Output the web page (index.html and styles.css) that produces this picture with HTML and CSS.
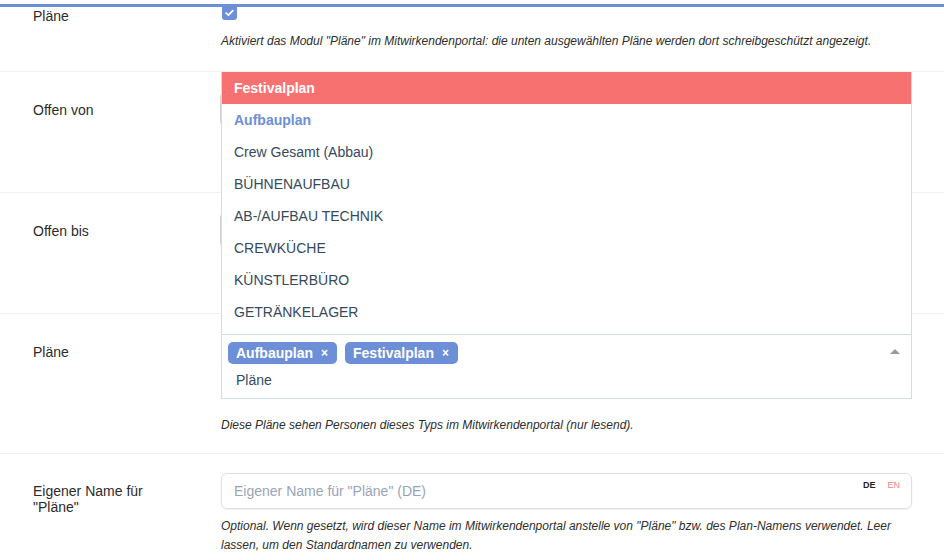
FILE: index.html
```html
<!DOCTYPE html>
<html lang="de">
<head>
    <meta charset="UTF-8">
    <meta name="viewport" content="width=device-width, initial-scale=1.0">
    <title>Mitwirkendenportal – Pläne</title>
    <link rel="stylesheet" href="styles.css">
</head>
<body>
    <div class="top-bar"></div>

    <div class="form">
        <div class="form-row row-first">
            <div class="form-label label-first">Pläne</div>
            <div class="form-field">
                <span class="checkbox">
                    <svg width="9" height="8" viewBox="0 0 9 8"><path d="M1.2 4.2 L3.4 6.2 L7.8 1.6" fill="none" stroke="#fff" stroke-width="1.8" stroke-linecap="round" stroke-linejoin="round"/></svg>
                </span>
                <div class="help help-first">Aktiviert das Modul "Pläne" im Mitwirkendenportal: die unten ausgewählten Pläne werden dort schreibgeschützt angezeigt.</div>
            </div>
        </div>

        <div class="form-row">
            <div class="form-label label-input">Offen von</div>
            <div class="form-field">
                <div class="date-input"></div>
                <div class="help-space"></div>
            </div>
        </div>

        <div class="form-row">
            <div class="form-label label-input">Offen bis</div>
            <div class="form-field">
                <div class="date-input"></div>
                <div class="help-space"></div>
            </div>
        </div>

        <div class="form-row row-select">
            <div class="form-label label-select">Pläne</div>
            <div class="form-field">
                <div class="multiselect">
                    <!-- Auswahlliste öffnet nach oben -->
                    <ul class="multiselect-content">
                        <li class="option option-highlight">Festivalplan</li>
                        <li class="option option-selected">Aufbauplan</li>
                        <li class="option">Crew Gesamt (Abbau)</li>
                        <li class="option">BÜHNENAUFBAU</li>
                        <li class="option">AB-/AUFBAU TECHNIK</li>
                        <li class="option">CREWKÜCHE</li>
                        <li class="option">KÜNSTLERBÜRO</li>
                        <li class="option">GETRÄNKELAGER</li>
                    </ul>
                    <div class="multiselect-tags">
                        <span class="tag">Aufbauplan<span class="tag-remove">×</span></span>
                        <span class="tag">Festivalplan<span class="tag-remove">×</span></span>
                    </div>
                    <div class="multiselect-search">Pläne</div>
                    <span class="multiselect-caret"></span>
                </div>
                <div class="help help-select">Diese Pläne sehen Personen dieses Typs im Mitwirkendenportal (nur lesend).</div>
            </div>
        </div>

        <div class="form-row row-name">
            <div class="form-label label-name">Eigener Name für "Pläne"</div>
            <div class="form-field">
                <div class="lang-input">
                    <div class="text-input">Eigener Name für "Pläne" (DE)</div>
                    <div class="lang-switch">
                        <span class="lang lang-active">DE</span>
                        <span class="lang">EN</span>
                    </div>
                </div>
                <div class="help help-name">Optional. Wenn gesetzt, wird dieser Name im Mitwirkendenportal anstelle von "Pläne" bzw. des Plan-Namens verwendet. Leer lassen, um den Standardnamen zu verwenden.</div>
            </div>
        </div>
    </div>
</body>
</html>
```

FILE: styles.css
```css
body {
    font-family: "Liberation Sans", Arial, sans-serif;
    background-color: #FFFFFF;
    color: #2B2B2B;
    margin: 0;
    overflow: hidden;
}
.top-bar {
    position: absolute;
    top: 4px;
    left: 0;
    right: 0;
    height: 3px;
    background-color: #6D8FD7;
    z-index: 5;
}
.form-row {
    display: grid;
    grid-template-columns: 221px 1fr;
    padding: 20px 32px 20px 0;
    border-bottom: 1px solid #F0F0F0;
}
.row-first {
    padding-top: 5px;
}
.row-select {
    padding-bottom: 18px;
}
.row-name {
    padding-top: 19px;
}
.form-label {
    font-size: 14px;
    line-height: 16px;
    padding-left: 33px;
    padding-right: 40px;
}
.label-first {
    padding-top: 3px;
}
.label-input {
    padding-top: 10px;
}
.label-select {
    padding-top: 10px;
}
.label-name {
    padding-top: 10px;
}
.form-field {
    min-width: 0;
}
.checkbox {
    display: flex;
    align-items: center;
    justify-content: center;
    width: 15px;
    height: 15px;
    border-radius: 3px;
    background-color: #6D8FD7;
    margin-left: 1px;
}
.help {
    font-size: 12px;
    font-style: italic;
    line-height: 19px;
    color: #2E2E2E;
}
.help-first {
    margin-top: 12px;
}
.help-select {
    margin-top: 17px;
}
.help-name {
    margin-top: 8px;
}
.date-input {
    height: 32px;
    margin-left: -1px;
    border: 1px solid #D6D6D6;
    border-radius: 4px;
}
.help-space {
    height: 46px;
}
.multiselect {
    position: relative;
    border: 1px solid #D3DBE7;
    padding: 7px 0 8px 6px;
    color: #35495E;
    font-size: 14px;
}
.multiselect-content {
    position: absolute;
    left: -1px;
    right: -1px;
    bottom: 100%;
    margin: 0;
    padding: 0 0 6px 0;
    list-style: none;
    background-color: #FFFFFF;
    border: 1px solid #D3DBE7;
    border-top: none;
    z-index: 3;
}
.option {
    height: 32px;
    line-height: 32px;
    padding: 0 12px;
}
.option-highlight {
    background-color: #F87171;
    color: #FFFFFF;
    font-weight: bold;
}
.option-selected {
    color: #6D8FD7;
    font-weight: bold;
}
.multiselect-tags {
    display: flex;
    gap: 8px;
    margin-bottom: 6px;
}
.tag {
    display: inline-flex;
    align-items: center;
    height: 22px;
    padding: 0 9px 0 8px;
    border-radius: 5px;
    background-color: #6D8FD7;
    color: #FFFFFF;
    font-weight: bold;
}
.tag-remove {
    margin-left: 8px;
    font-size: 12px;
}
.multiselect-search {
    height: 20px;
    line-height: 20px;
    padding-left: 8px;
}
.multiselect-caret {
    position: absolute;
    top: 14px;
    right: 11px;
    width: 0;
    height: 0;
    border-left: 5px solid transparent;
    border-right: 5px solid transparent;
    border-bottom: 5px solid #999999;
}
.lang-input {
    position: relative;
}
.text-input {
    height: 34px;
    line-height: 34px;
    padding-left: 12px;
    border: 1px solid #DCDFE5;
    border-radius: 6px;
    box-shadow: 0 1px 2px rgba(0, 0, 0, 0.06);
    font-size: 14px;
    color: #9AA4B6;
}
.lang-switch {
    position: absolute;
    top: 7px;
    right: 12px;
    display: flex;
    gap: 12px;
    font-size: 9px;
}
.lang {
    color: #F08585;
}
.lang-active {
    color: #1F1F1F;
    font-weight: bold;
}
```
